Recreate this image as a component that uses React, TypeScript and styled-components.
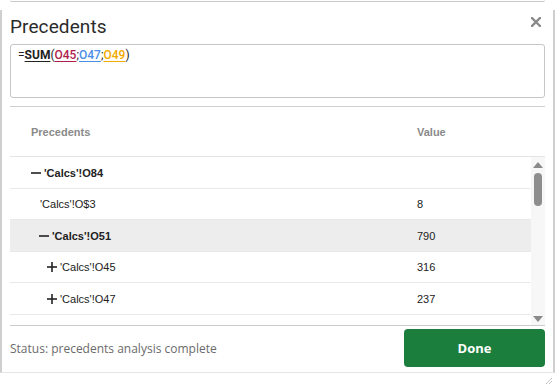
import styled, { createGlobalStyle } from 'styled-components';

type Row = {
  label: string;
  value?: string;
  level: number;
  toggle?: 'open' | 'closed';
  bold?: boolean;
  selected?: boolean;
};

const rows: Row[] = [
  { label: "'Calcs'!O84", level: 0, toggle: 'open', bold: true },
  { label: "'Calcs'!O$3", value: '8', level: 1 },
  { label: "'Calcs'!O51", value: '790', level: 1, toggle: 'open', bold: true, selected: true },
  { label: "'Calcs'!O45", value: '316', level: 2, toggle: 'closed' },
  { label: "'Calcs'!O47", value: '237', level: 2, toggle: 'closed' },
];

const GlobalStyle = createGlobalStyle`
  html, body {
    margin: 0;
    padding: 0;
    background: #ffffff;
  }
  body {
    width: 555px;
    height: 386px;
    overflow: hidden;
    font-family: Roboto, "Liberation Sans", sans-serif;
  }
`;

const Toggle = ({ kind }: { kind: 'open' | 'closed' }) => (
  <ToggleIcon viewBox="0 0 10 10" width="10" height="10">
    <line x1="0" y1="5" x2="10" y2="5" stroke="#222" strokeWidth="1.6" />
    {kind === 'closed' && <line x1="5" y1="0" x2="5" y2="10" stroke="#222" strokeWidth="1.6" />}
  </ToggleIcon>
);

export default function App() {
  return (
    <>
      <GlobalStyle />
      <Page>
        <TopSheet />
        <Dialog>
          <Header>
            <Title>Precedents</Title>
            <CloseButton aria-label="Close">
              <svg viewBox="0 0 10 10" width="10" height="10">
                <path d="M1 1 L9 9 M9 1 L1 9" stroke="#8a8a8a" strokeWidth="2.4" strokeLinecap="square" />
              </svg>
            </CloseButton>
          </Header>

          <FormulaBox>
            <span>=</span>
            <Fn>SUM</Fn>
            <span>(</span>
            <Ref $color="#b01e4d">O45</Ref>
            <span>;</span>
            <Ref $color="#4a8fe7">O47</Ref>
            <span>;</span>
            <Ref $color="#f2a900">O49</Ref>
            <span>)</span>
          </FormulaBox>

          <Divider />

          <Table>
            <HeadRow>
              <HeadCell>Precedents</HeadCell>
              <HeadCell>Value</HeadCell>
            </HeadRow>
            <Body>
              <RowList>
                {rows.map((r, i) => (
                  <DataRow key={i} $selected={!!r.selected}>
                    <NameCell $level={r.level} $bold={!!r.bold} $hasToggle={!!r.toggle}>
                      {r.toggle && <Toggle kind={r.toggle} />}
                      {r.label}
                    </NameCell>
                    <ValueCell>{r.value ?? ''}</ValueCell>
                  </DataRow>
                ))}
                <PartialRow />
              </RowList>
              <ScrollTrack>
                <Arrow viewBox="0 0 10 6" width="10" height="6">
                  <path d="M0 6 L5 0 L10 6 Z" fill="#8a8a8a" />
                </Arrow>
                <Thumb />
                <Spacer />
                <Arrow viewBox="0 0 10 6" width="10" height="6">
                  <path d="M0 0 L10 0 L5 6 Z" fill="#8a8a8a" />
                </Arrow>
              </ScrollTrack>
            </Body>
          </Table>

          <Footer>
            <Status>Status: precedents analysis complete</Status>
            <DoneButton>Done</DoneButton>
          </Footer>
        </Dialog>
        <GripRow>
          <svg viewBox="0 0 8 8" width="8" height="8">
            <path d="M7 1 L1 7 M7 4 L4 7" stroke="#b5b5b5" strokeWidth="0.8" />
          </svg>
        </GripRow>
      </Page>
    </>
  );
}

const Page = styled.div`
  display: flex;
  flex-direction: column;
  width: 555px;
  height: 386px;
`;

const TopSheet = styled.div`
  height: 1px;
  margin: 0 10px 0 10px;
  border-bottom: 1px solid #c9c9c9;
  border-radius: 0 0 8px 8px;
`;

const Dialog = styled.div`
  display: flex;
  flex-direction: column;
  margin-top: 8px;
  height: 363px;
  box-sizing: border-box;
  border-left: 2px solid #cfcfcf;
  border-right: 2px solid #cfcfcf;
  border-bottom: 1px solid #e6e6e6;
  padding: 0 8px 0 8px;
  background: #ffffff;
`;

const Header = styled.div`
  display: flex;
  align-items: center;
  justify-content: space-between;
  height: 32px;
`;

const Title = styled.h2`
  margin: 0;
  font-family: Roboto, "Liberation Sans", sans-serif;
  font-weight: 400;
  font-size: 19px;
  color: #2b2b2b;
  letter-spacing: 0.1px;
`;

const CloseButton = styled.button`
  display: flex;
  align-items: center;
  justify-content: center;
  border: none;
  background: none;
  padding: 0;
  margin-right: 3px;
  margin-top: -8px;
  width: 12px;
  height: 12px;
`;

const FormulaBox = styled.div`
  margin-top: 2px;
  height: 54px;
  box-sizing: border-box;
  border: 1px solid #c6c6c6;
  border-radius: 3px;
  padding: 2px 7px;
  font-family: Roboto, "Liberation Sans", sans-serif;
  font-size: 12px;
  color: #222;
  line-height: 16px;
`;

const Fn = styled.span`
  font-weight: 700;
  text-decoration: underline;
  text-underline-offset: 2px;
`;

const Ref = styled.span<{ $color: string }>`
  color: ${(p) => p.$color};
  font-weight: 500;
  text-decoration: underline;
  text-underline-offset: 2px;
`;

const Divider = styled.div`
  margin-top: 8px;
  border-top: 1px solid #cfcfcf;
`;

const Table = styled.div`
  display: flex;
  flex-direction: column;
  height: 218px;
  border-bottom: 1px solid #cccccc;
  font-family: "Liberation Sans", Arial, sans-serif;
  font-size: 11px;
`;

const HeadRow = styled.div`
  display: grid;
  grid-template-columns: 386px 1fr;
  align-items: center;
  height: 49px;
  border-bottom: 1px solid #e4e4e4;
  padding-left: 21px;
`;

const HeadCell = styled.div`
  font-weight: 700;
  color: #8a8a8a;
`;

const Body = styled.div`
  display: flex;
  flex: 1;
  overflow: hidden;
`;

const RowList = styled.div`
  flex: 1;
  display: flex;
  flex-direction: column;
  overflow: hidden;
`;

const DataRow = styled.div<{ $selected: boolean }>`
  display: grid;
  grid-template-columns: 407px 1fr;
  align-items: center;
  flex: none;
  height: 29.5px;
  padding-top: 1px;
  box-sizing: content-box;
  border-bottom: 1px solid #e9e9e9;
  background: ${(p) => (p.$selected ? '#ededed' : 'transparent')};
  color: #222;
`;

const PartialRow = styled.div`
  flex: 1;
`;

const NameCell = styled.div<{ $level: number; $bold: boolean; $hasToggle: boolean }>`
  display: flex;
  align-items: center;
  gap: 3px;
  padding-left: ${(p) => 21 + p.$level * 8 + (p.$hasToggle ? 0 : 1)}px;
  font-weight: ${(p) => (p.$bold ? 700 : 400)};
`;

const ToggleIcon = styled.svg`
  flex: none;
`;

const ValueCell = styled.div`
  color: #222;
`;

const ScrollTrack = styled.div`
  display: flex;
  flex-direction: column;
  align-items: center;
  width: 14px;
  background: #f7f7f7;
  padding: 5px 0 3px;
  box-sizing: border-box;
`;

const Arrow = styled.svg`
  flex: none;
`;

const Thumb = styled.div`
  margin-top: 5px;
  width: 8px;
  height: 33px;
  border-radius: 4px;
  background: #8e8e8e;
`;

const Spacer = styled.div`
  flex: 1;
`;

const Footer = styled.div`
  display: flex;
  align-items: center;
  justify-content: space-between;
  flex: 1;
  padding-bottom: 2px;
`;

const Status = styled.div`
  font-family: "Open Sans", "Noto Sans", sans-serif;
  font-size: 12px;
  color: #6b6b6b;
`;

const DoneButton = styled.button`
  width: 141px;
  height: 38px;
  border: none;
  border-radius: 4px;
  background: #1b7e3d;
  color: #ffffff;
  font-family: "Open Sans", "Noto Sans", sans-serif;
  font-weight: 700;
  font-size: 13px;
`;

const GripRow = styled.div`
  display: flex;
  justify-content: flex-end;
  padding: 4px 2px 0 0;
`;
